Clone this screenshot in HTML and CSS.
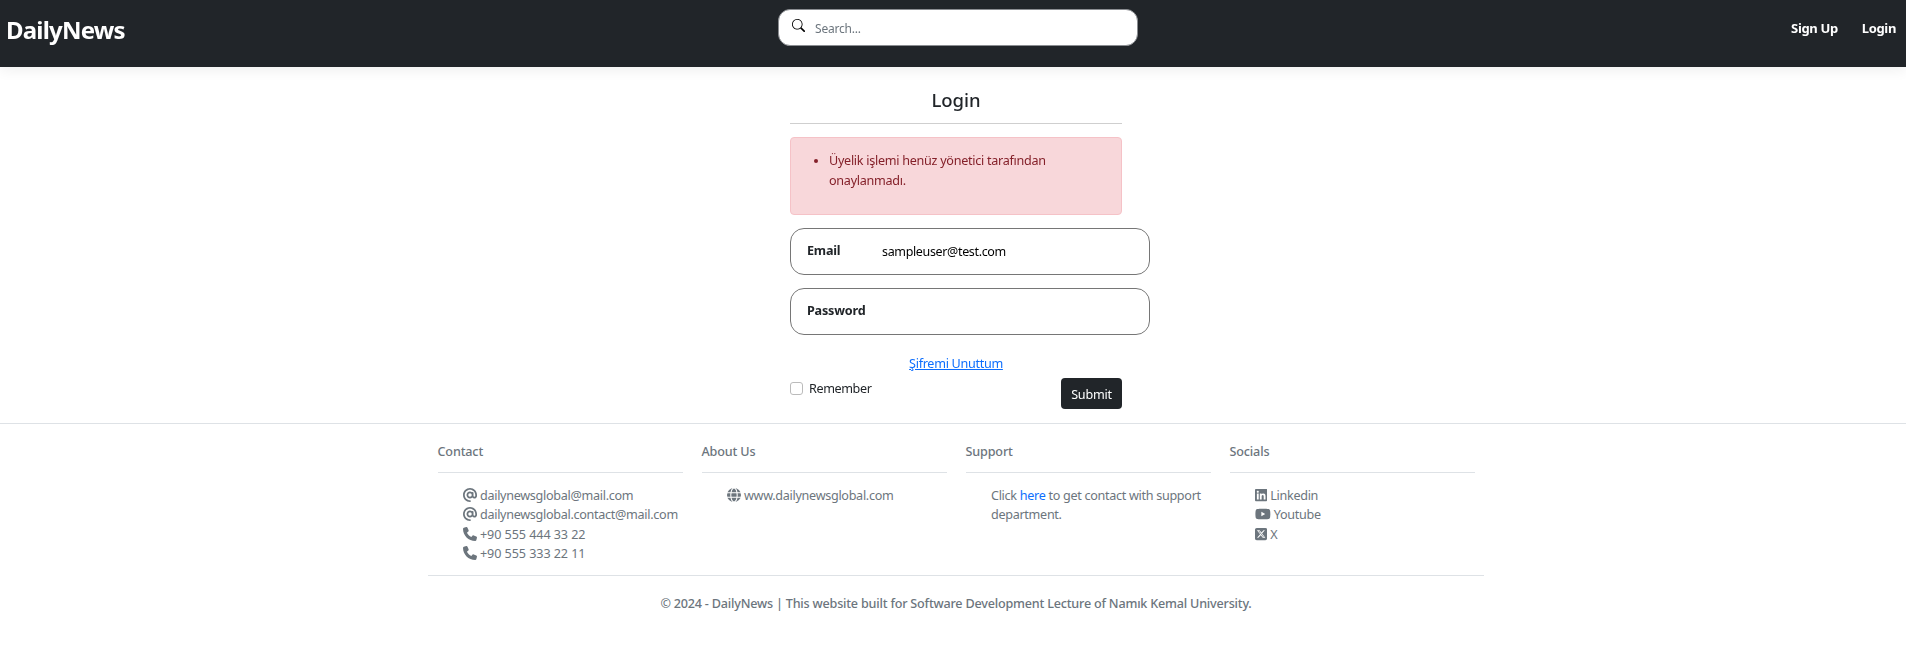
FILE: index.html
```html
<!DOCTYPE html>
<html lang="tr">
<head>
    <meta charset="UTF-8">
    <meta name="viewport" content="width=device-width, initial-scale=1.0">
    <title>DailyNews</title>
    <link rel="stylesheet" href="styles.css">
</head>
<body>
    <nav class="navbar">
        <a class="brand" href="#">DailyNews</a>
        <form class="search">
            <svg class="search-icon" viewBox="0 0 16 16"><path d="M11.742 10.344a6.5 6.5 0 1 0-1.397 1.398h-.001c.03.04.062.078.098.115l3.85 3.85a1 1 0 0 0 1.415-1.414l-3.85-3.85a1.007 1.007 0 0 0-.115-.1zM12 6.5a5.5 5.5 0 1 1-11 0 5.5 5.5 0 0 1 11 0z"/></svg>
            <span class="search-text">Search...</span>
        </form>
        <div class="nav-links">
            <a href="#">Sign Up</a>
            <a href="#">Login</a>
        </div>
    </nav>

    <main class="login">
        <h1 class="login-title">Login</h1>
        <hr class="login-line">
        <div class="alert">
            <ul>
                <li>Üyelik işlemi henüz yönetici tarafından onaylanmadı.</li>
            </ul>
        </div>
        <div class="field">
            <label>Email</label>
            <span class="field-value">sampleuser@test.com</span>
        </div>
        <div class="field">
            <label>Password</label>
        </div>
        <a class="forgot" href="#">Şifremi Unuttum</a>
        <div class="form-end">
            <label class="remember"><span class="check"></span>Remember</label>
            <button class="submit" type="button">Submit</button>
        </div>
    </main>

    <footer class="footer">
        <div class="footer-inner">
            <div class="footer-cols">
                <section class="col">
                    <h2>Contact</h2>
                    <ul>
                        <li><svg class="icon" viewBox="0 0 512 512"><path d="M256 64C150 64 64 150 64 256s86 192 192 192c17.7 0 32 14.3 32 32s-14.3 32-32 32C114.6 512 0 397.4 0 256S114.6 0 256 0S512 114.6 512 256v32c0 53-43 96-96 96c-29.3 0-55.6-13.2-73.2-33.9C320 371.1 289.5 384 256 384c-70.7 0-128-57.3-128-128s57.3-128 128-128c27.9 0 53.7 8.9 74.7 24.1c5.7-5 13.1-8.1 21.3-8.1c17.7 0 32 14.3 32 32v80 32c0 17.7 14.3 32 32 32s32-14.3 32-32V256c0-106-86-192-192-192zm64 192a64 64 0 1 0 -128 0 64 64 0 1 0 128 0z"/></svg>dailynewsglobal@mail.com</li>
                        <li><svg class="icon" viewBox="0 0 512 512"><path d="M256 64C150 64 64 150 64 256s86 192 192 192c17.7 0 32 14.3 32 32s-14.3 32-32 32C114.6 512 0 397.4 0 256S114.6 0 256 0S512 114.6 512 256v32c0 53-43 96-96 96c-29.3 0-55.6-13.2-73.2-33.9C320 371.1 289.5 384 256 384c-70.7 0-128-57.3-128-128s57.3-128 128-128c27.9 0 53.7 8.9 74.7 24.1c5.7-5 13.1-8.1 21.3-8.1c17.7 0 32 14.3 32 32v80 32c0 17.7 14.3 32 32 32s32-14.3 32-32V256c0-106-86-192-192-192zm64 192a64 64 0 1 0 -128 0 64 64 0 1 0 128 0z"/></svg>dailynewsglobal.contact@mail.com</li>
                        <li class="tel"><svg class="icon" viewBox="0 0 512 512"><path d="M164.9 24.6c-7.7-18.6-28-28.5-47.4-23.2l-88 24C12.1 30.2 0 46 0 64C0 311.4 200.6 512 448 512c18 0 33.8-12.1 38.6-29.5l24-88c5.3-19.4-4.6-39.7-23.2-47.4l-96-40c-16.3-6.8-35.2-2.1-46.3 11.6L304.7 368C234.3 334.7 177.3 277.7 144 207.3L193.3 167c13.7-11.2 18.4-30 11.6-46.3l-40-96z"/></svg>+90 555 444 33 22</li>
                        <li class="tel"><svg class="icon" viewBox="0 0 512 512"><path d="M164.9 24.6c-7.7-18.6-28-28.5-47.4-23.2l-88 24C12.1 30.2 0 46 0 64C0 311.4 200.6 512 448 512c18 0 33.8-12.1 38.6-29.5l24-88c5.3-19.4-4.6-39.7-23.2-47.4l-96-40c-16.3-6.8-35.2-2.1-46.3 11.6L304.7 368C234.3 334.7 177.3 277.7 144 207.3L193.3 167c13.7-11.2 18.4-30 11.6-46.3l-40-96z"/></svg>+90 555 333 22 11</li>
                    </ul>
                </section>
                <section class="col">
                    <h2>About Us</h2>
                    <ul>
                        <li><svg class="icon" viewBox="0 0 24 24"><circle cx="12" cy="12" r="12"/><g fill="none" stroke="#fff" stroke-width="1.8"><ellipse cx="12" cy="12" rx="5.5" ry="12"/><path d="M0 8h24M0 16h24"/></g></svg>www.dailynewsglobal.com</li>
                    </ul>
                </section>
                <section class="col">
                    <h2>Support</h2>
                    <ul>
                        <li>Click <a href="#">here</a> to get contact with support department.</li>
                    </ul>
                </section>
                <section class="col">
                    <h2>Socials</h2>
                    <ul>
                        <li><svg class="icon icon-sm" viewBox="0 0 448 512"><path d="M416 32H31.9C14.3 32 0 46.5 0 64.3v383.4C0 465.5 14.3 480 31.9 480H416c17.6 0 32-14.5 32-32.3V64.3c0-17.8-14.4-32.3-32-32.3zM135.4 416H69V202.2h66.5V416zm-33.2-243c-21.3 0-38.5-17.3-38.5-38.5S80.9 96 102.2 96c21.2 0 38.5 17.3 38.5 38.5 0 21.3-17.2 38.5-38.5 38.5zm282.1 243h-66.4V312c0-24.8-.5-56.7-34.5-56.7-34.6 0-39.9 27-39.9 54.9V416h-66.4V202.2h63.7v29.2h.9c8.9-16.8 30.6-34.5 62.9-34.5 67.2 0 79.7 44.3 79.7 101.9V416z"/></svg>Linkedin</li>
                        <li><svg class="icon icon-wide" viewBox="0 0 576 512"><path d="M549.655 124.083c-6.281-23.65-24.787-42.276-48.284-48.597C458.781 64 288 64 288 64S117.22 64 74.629 75.486c-23.497 6.322-42.003 24.947-48.284 48.597-11.412 42.867-11.412 132.305-11.412 132.305s0 89.438 11.412 132.305c6.281 23.65 24.787 41.5 48.284 47.821C117.22 448 288 448 288 448s170.78 0 213.371-11.486c23.497-6.321 42.003-24.171 48.284-47.821 11.412-42.867 11.412-132.305 11.412-132.305s0-89.438-11.412-132.305zm-317.51 213.508V175.185l142.739 81.205-142.739 81.201z"/></svg>Youtube</li>
                        <li><svg class="icon icon-sm" viewBox="0 0 448 512"><path d="M64 32C28.7 32 0 60.7 0 96V416c0 35.3 28.7 64 64 64H384c35.3 0 64-28.7 64-64V96c0-35.3-28.7-64-64-64H64zm297.1 84L257.3 234.6 379.4 396H283.8L209 298.1 123.3 396H75.8l111-126.9L69.7 116h98l67.7 89.5L313.6 116h47.5zM323.3 367.6L153.4 142.9H125.1L296.9 367.6h26.3z"/></svg>X</li>
                    </ul>
                </section>
            </div>
            <p class="copyright">© 2024 - DailyNews | This website built for Software Development Lecture of Namık Kemal University.</p>
        </div>
    </footer>
</body>
</html>
```

FILE: styles.css
```css
* { margin: 0; padding: 0; box-sizing: border-box; }
body {
    font-family: "Noto Sans", "Open Sans", sans-serif;
    font-size: 12.6px;
    color: #212529;
    background-color: #fff;
}
a { color: #0d6efd; }

/* navbar */
.navbar {
    height: 67px;
    background-color: #212529;
    box-shadow: 0 4px 12px rgba(0,0,0,.06);
    display: grid;
    grid-template-columns: 1fr 360px 1fr;
    padding: 0 10px 0 6px;
    transform: translateZ(0);
}
.brand {
    color: #fff;
    font-size: 24px;
    font-weight: 700;
    letter-spacing: -0.8px;
    text-decoration: none;
    line-height: 60px;
}
.search {
    grid-column: 2;
    height: 37px;
    margin: 9px -7px 0 7px;
    background-color: #fff;
    border: 1px solid #8a8d91;
    border-radius: 12px;
    display: flex;
    align-items: center;
    padding: 1px 0 0 13px;
}
.search-icon { width: 13px; height: 13px; margin-right: 10px; margin-bottom: 5px; }
.search-text { color: #6c757d; font-size: 12px; letter-spacing: -0.2px; }
.nav-links {
    display: flex;
    justify-content: flex-end;
    align-items: flex-start;
    gap: 24px;
}
.nav-links a {
    color: #fff;
    font-weight: 700;
    font-size: 13px;
    letter-spacing: -0.35px;
    text-decoration: none;
    line-height: 56px;
}

/* login form */
.login {
    width: 332px;
    margin: 0 auto;
    position: relative;
    left: 3px;
    height: 356px;
    padding-top: 20px;
}
.login-title {
    font-size: 18.5px;
    font-weight: 500;
    text-align: center;
    line-height: 26px;
}
.login-line { border: 0; border-top: 1px solid #cfcfcf; margin-top: 10px; }
.alert {
    margin-top: 13px;
    height: 78px;
    background-color: #f8d7da;
    border: 1px solid #f5c2c7;
    border-radius: 4px;
    color: #842029;
    letter-spacing: -0.28px;
    line-height: 20px;
    padding: 13px 16px;
}
.alert ul { padding-left: 22px; }
.field {
    width: 360px;
    height: 47px;
    margin-top: 13px;
    border: 1px solid #767676;
    border-radius: 14px;
    display: flex;
    padding: 13px 16px 0;
}
.field + .field { margin-top: 13px; }
.field label { font-weight: 700; width: 75px; font-size: 12.6px; letter-spacing: -0.2px; }
.field-value { color: #000; font-size: 12.5px; letter-spacing: -0.35px; margin-top: 1px; }
.forgot { display: block; text-align: center; margin-top: 20px; line-height: 18px; letter-spacing: -0.3px; }
.form-end { display: flex; justify-content: space-between; align-items: flex-start; margin-top: 5px; }
.remember { display: flex; align-items: center; gap: 6px; letter-spacing: -0.4px; margin-top: 2px; }
.check { width: 13px; height: 13px; border: 1px solid #bbb; border-radius: 3px; }
.submit {
    width: 61px;
    height: 31px;
    padding-top: 2px;
    background-color: #212529;
    color: #fff;
    border: 0;
    border-radius: 4px;
    font-family: inherit;
    font-size: 12.6px;
    letter-spacing: -0.22px;
}

/* footer */
.footer { border-top: 1px solid #dee2e6; padding-top: 18px; }
.footer-inner { width: 1056px; margin: 0 auto; position: relative; left: 3px; color: #6c757d; }
.footer-cols { display: grid; grid-template-columns: repeat(4, 1fr); border-bottom: 1px solid #dee2e6; padding-bottom: 12px; }
.col { padding: 0 9.5px; }
.col h2 {
    font-size: 12.6px;
    font-weight: 500;
    letter-spacing: -0.15px;
    line-height: 20px;
    padding-bottom: 10px;
    border-bottom: 1px solid #dee2e6;
}
.col ul { list-style: none; padding: 13px 0 0 25.5px; }
.col li { line-height: 19.3px; letter-spacing: -0.3px; }
.col li.tel { letter-spacing: -0.08px; }
.col a { color: #0d6efd; text-decoration: none; }
.icon { width: 14px; height: 14px; fill: #6c757d; margin-right: 3px; vertical-align: -2px; }
.icon-sm { width: 12.25px; }
.icon-wide { width: 15.75px; }
.copyright { text-align: center; font-weight: 500; letter-spacing: -0.2px; margin-top: 19px; }
```
